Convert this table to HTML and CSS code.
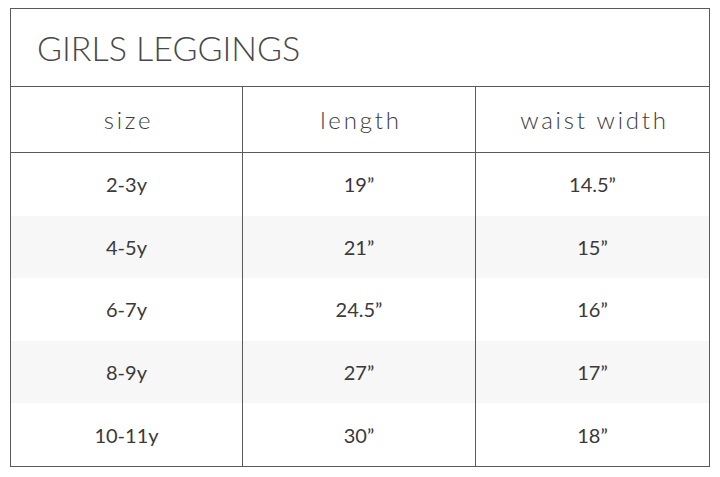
FILE: index.html
```html
<!DOCTYPE html>
<html>
<head>
<meta charset="utf-8">
<link rel="stylesheet" href="styles.css">
</head>
<body>
<div class="chart">
  <div class="title">GIRLS LEGGINGS</div>
  <div class="grid">
    <div class="cell head">size</div>
    <div class="cell head">length</div>
    <div class="cell head last">waist width</div>

    <div class="cell">2-3y</div>
    <div class="cell">19”</div>
    <div class="cell last">14.5”</div>

    <div class="cell alt">4-5y</div>
    <div class="cell alt">21”</div>
    <div class="cell alt last">15”</div>

    <div class="cell">6-7y</div>
    <div class="cell">24.5”</div>
    <div class="cell last">16”</div>

    <div class="cell alt">8-9y</div>
    <div class="cell alt">27”</div>
    <div class="cell alt last">17”</div>

    <div class="cell">10-11y</div>
    <div class="cell">30”</div>
    <div class="cell last">18”</div>
  </div>
</div>
</body>
</html>
```
FILE: styles.css
```css
html, body {
  margin: 0;
  padding: 0;
  background: #fff;
}
body {
  font-family: Lato, "Open Sans", sans-serif;
  padding: 8px 10px 0 10px;
}
.chart {
  width: 698px;
  border: 1px solid #5a5a5a;
  box-sizing: content-box;
}
.title {
  height: 77px;
  display: flex;
  align-items: center;
  padding-left: 26px;
  font-size: 34px;
  font-weight: 300;
  color: #484848;
  border-bottom: 1px solid #5a5a5a;
}
.grid {
  display: grid;
  grid-template-columns: 232px 233px 233px;
  grid-template-rows: 66px repeat(5, 62.6px);
}
.cell {
  display: flex;
  align-items: center;
  justify-content: center;
  font-size: 20px;
  font-weight: 400;
  color: #3a3a3a;
  border-right: 1px solid #5a5a5a;
}
.cell.last {
  border-right: none;
}
.cell.head {
  border-bottom: 1px solid #5a5a5a;
  font-size: 24px;
  font-weight: 300;
  letter-spacing: 2.8px;
  color: #3c3c3c;
  padding-left: 4px;
}
.cell.alt {
  background: #f7f7f7;
}
```
